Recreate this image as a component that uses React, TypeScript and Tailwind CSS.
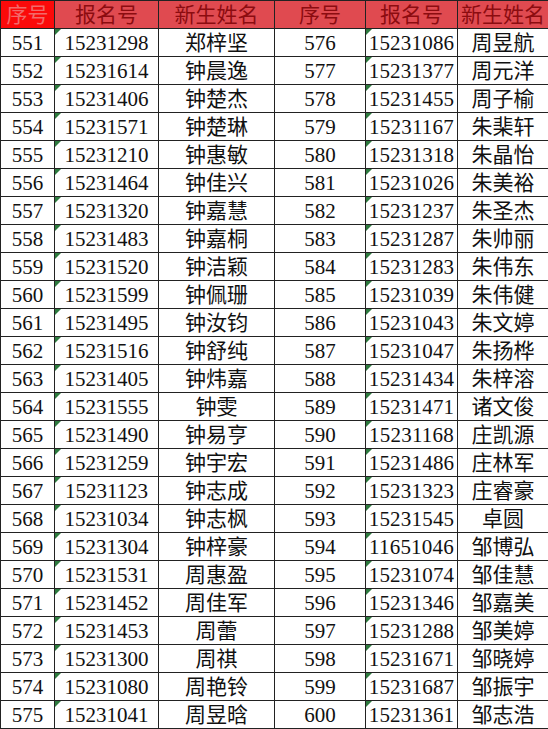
const left: [string, string, string][] = [
  ["551", "15231298", "郑梓坚"],
  ["552", "15231614", "钟晨逸"],
  ["553", "15231406", "钟楚杰"],
  ["554", "15231571", "钟楚琳"],
  ["555", "15231210", "钟惠敏"],
  ["556", "15231464", "钟佳兴"],
  ["557", "15231320", "钟嘉慧"],
  ["558", "15231483", "钟嘉桐"],
  ["559", "15231520", "钟洁颖"],
  ["560", "15231599", "钟佩珊"],
  ["561", "15231495", "钟汝钧"],
  ["562", "15231516", "钟舒纯"],
  ["563", "15231405", "钟炜嘉"],
  ["564", "15231555", "钟雯"],
  ["565", "15231490", "钟易亨"],
  ["566", "15231259", "钟宇宏"],
  ["567", "15231123", "钟志成"],
  ["568", "15231034", "钟志枫"],
  ["569", "15231304", "钟梓豪"],
  ["570", "15231531", "周惠盈"],
  ["571", "15231452", "周佳军"],
  ["572", "15231453", "周蕾"],
  ["573", "15231300", "周祺"],
  ["574", "15231080", "周艳铃"],
  ["575", "15231041", "周昱晗"],
];

const right: [string, string, string][] = [
  ["576", "15231086", "周昱航"],
  ["577", "15231377", "周元洋"],
  ["578", "15231455", "周子榆"],
  ["579", "15231167", "朱棐轩"],
  ["580", "15231318", "朱晶怡"],
  ["581", "15231026", "朱美裕"],
  ["582", "15231237", "朱圣杰"],
  ["583", "15231287", "朱帅丽"],
  ["584", "15231283", "朱伟东"],
  ["585", "15231039", "朱伟健"],
  ["586", "15231043", "朱文婷"],
  ["587", "15231047", "朱扬桦"],
  ["588", "15231434", "朱梓溶"],
  ["589", "15231471", "诸文俊"],
  ["590", "15231168", "庄凯源"],
  ["591", "15231486", "庄林军"],
  ["592", "15231323", "庄睿豪"],
  ["593", "15231545", "卓圆"],
  ["594", "11651046", "邹博弘"],
  ["595", "15231074", "邹佳慧"],
  ["596", "15231346", "邹嘉美"],
  ["597", "15231288", "邹美婷"],
  ["598", "15231671", "邹晓婷"],
  ["599", "15231687", "邹振宇"],
  ["600", "15231361", "邹志浩"],
];

// little green "number stored as text" marker
function Flag() {
  return (
    <span className="absolute left-0 top-0 h-0 w-0 border-t-[6px] border-r-[6px] border-t-[#2d7a3e] border-r-transparent" />
  );
}

const cell = "relative h-[28px] border border-[#222] p-0 text-center align-middle";

export default function App() {
  return (
    <div
      className="w-[548px] bg-white text-[21px] leading-[26px] text-[#111]"
      style={{ fontFamily: '"Liberation Serif", "Noto Sans CJK SC", serif' }}
    >
      <table className="w-[548px] table-fixed border-collapse">
        <colgroup>
          <col className="w-[54px]" />
          <col className="w-[104px]" />
          <col className="w-[116px]" />
          <col className="w-[91px]" />
          <col className="w-[92px]" />
          <col className="w-[91px]" />
        </colgroup>
        <thead>
          <tr className="text-[#8c0c10]">
            <th className={`${cell} bg-[#fb0a0a] font-normal text-[#f26a6a]`}>序号</th>
            <th className={`${cell} bg-[#e04a50] font-normal`}>报名号</th>
            <th className={`${cell} bg-[#e04a50] font-normal`}>新生姓名</th>
            <th className={`${cell} bg-[#e04a50] font-normal`}>序号</th>
            <th className={`${cell} bg-[#e04a50] font-normal`}>报名号</th>
            <th className={`${cell} bg-[#e04a50] font-normal`}>新生姓名</th>
          </tr>
        </thead>
        <tbody>
          {left.map((l, i) => {
            const r = right[i];
            return (
              <tr key={l[0]}>
                <td className={cell}>{l[0]}</td>
                <td className={cell}>
                  <Flag />
                  {l[1]}
                </td>
                <td className={cell}>{l[2]}</td>
                <td className={cell}>{r[0]}</td>
                <td className={`${cell} tracking-[0.2px]`}>
                  <Flag />
                  {r[1]}
                </td>
                <td className={cell}>{r[2]}</td>
              </tr>
            );
          })}
        </tbody>
      </table>
    </div>
  );
}
